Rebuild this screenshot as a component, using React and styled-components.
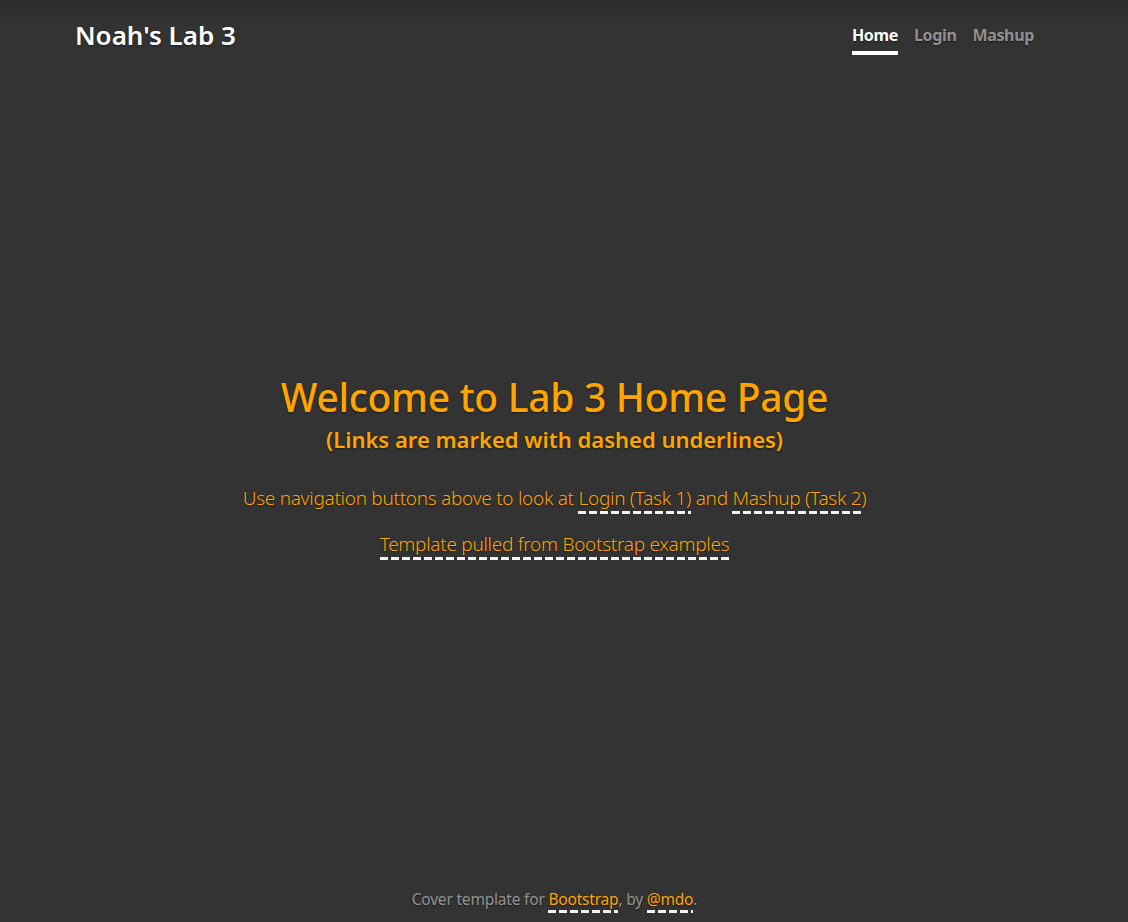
import React from "react";
import styled, { createGlobalStyle } from "styled-components";

const GlobalStyle = createGlobalStyle`
  html, body {
    margin: 0;
    height: 100%;
  }
  body {
    background: #333;
    color: #fff;
    font-family: "Noto Sans", "Open Sans", sans-serif;
    text-shadow: 0 0.05rem 0.1rem rgba(0, 0, 0, 0.5);
  }
  #root {
    min-height: 100%;
    display: flex;
  }
`;

const Page = styled.div`
  display: flex;
  flex-direction: column;
  width: 100%;
  min-height: 100vh;
  padding-right: 19px;
  box-sizing: border-box;
  background: linear-gradient(#2b2b2b, #333 22px);
`;

const Masthead = styled.header`
  display: flex;
  justify-content: space-between;
  align-items: flex-start;
  padding: 19px 75px 6px;
`;

const Brand = styled.h3`
  margin: 0;
  font-size: 26px;
  font-weight: 600;
  line-height: 32px;
  color: #fff;
`;

const Nav = styled.nav`
  display: flex;
  gap: 16px;
`;

const NavLink = styled.a`
  display: block;
  padding: 4px 0;
  font-size: 16px;
  font-weight: 700;
  line-height: 24px;
  letter-spacing: -0.35px;
  text-decoration: none;
  color: ${(p) => (p.$active ? "#fff" : "rgba(255, 255, 255, 0.5)")};
  border-bottom: 4px solid ${(p) => (p.$active ? "#fff" : "transparent")};
  cursor: pointer;
`;

const Main = styled.main`
  margin: auto 0;
  text-align: center;
  color: orange;
`;

const Title = styled.h1`
  margin: 0;
  font-size: 39px;
  font-weight: 500;
  line-height: 48px;
  letter-spacing: -0.3px;
`;

const Subtitle = styled.h3`
  margin: 4px 0 0;
  font-size: 22px;
  font-weight: 600;
  line-height: 29px;
`;

const Lead = styled.p`
  margin: ${(p) => p.$top}px 0 16px;
  font-size: 19px;
  font-weight: 300;
  line-height: 30px;
  letter-spacing: -0.28px;
`;

const DashedLink = styled.a`
  color: orange;
  text-decoration: none;
  padding-bottom: 3px;
  background: repeating-linear-gradient(90deg, #f2f2f2 0 8px, transparent 8px 11px)
    left bottom / 100% 3px no-repeat;
  cursor: pointer;
`;

const Footer = styled.footer`
  padding: 0 0 11px;
  text-align: center;
  font-size: 15.5px;
  line-height: 24px;
  letter-spacing: -0.2px;
  color: rgba(255, 255, 255, 0.5);
`;

export default function App() {
  return (
    <>
      <GlobalStyle />
      <Page>
        <Masthead>
          <Brand>Noah's Lab 3</Brand>
          <Nav>
            <NavLink $active>Home</NavLink>
            <NavLink>Login</NavLink>
            <NavLink>Mashup</NavLink>
          </Nav>
        </Masthead>
        <Main>
          <Title>Welcome to Lab 3 Home Page</Title>
          <Subtitle>(Links are marked with dashed underlines)</Subtitle>
          <Lead $top={29}>
            Use navigation buttons above to look at <DashedLink>Login (Task 1)</DashedLink> and{" "}
            <DashedLink>Mashup (Task 2</DashedLink>)
          </Lead>
          <Lead $top={0}>
            <DashedLink>Template pulled from Bootstrap examples</DashedLink>
          </Lead>
        </Main>
        <Footer>
          Cover template for <DashedLink>Bootstrap</DashedLink>, by <DashedLink>@mdo</DashedLink>.
        </Footer>
      </Page>
    </>
  );
}
